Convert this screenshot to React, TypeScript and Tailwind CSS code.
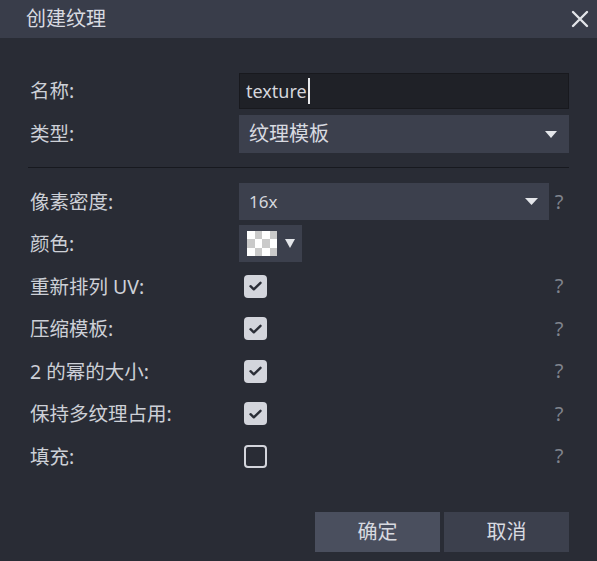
import React from "react";

const font = { fontFamily: '"Noto Sans", "Noto Sans CJK SC", sans-serif' };

function Check({ checked }: { checked: boolean }) {
  if (!checked)
    return <div className="w-[23px] h-[23px] rounded-[4px] border-[2px] border-[#d3d5dc]" />;
  return (
    <div className="w-[23px] h-[23px] rounded-[4px] bg-[#d3d5dc] flex items-center justify-center">
      <svg width="13" height="10" viewBox="0 0 13 10">
        <path d="M1.5 5.2 L4.8 8.3 L11.5 1.8" fill="none" stroke="#2a2d36" strokeWidth="2.4" strokeLinecap="round" strokeLinejoin="round" />
      </svg>
    </div>
  );
}

function Tri({ w = 12, h = 7 }: { w?: number; h?: number }) {
  return (
    <svg width={w} height={h} viewBox={`0 0 ${w} ${h}`}>
      <path d={`M0 0 L${w} 0 L${w / 2} ${h} Z`} fill="#e4e6ea" />
    </svg>
  );
}

function Help() {
  return <span className="text-[20px] text-[#7f838d] leading-none">?</span>;
}

export default function App() {
  const rows: [string, boolean][] = [
    ["重新排列 UV:", true],
    ["压缩模板:", true],
    ["2 的幂的大小:", true],
    ["保持多纹理占用:", true],
    ["填充:", false],
  ];
  return (
    <div className="w-[597px] h-[561px] bg-[#292c35] flex flex-col text-[#cdd0d7]" style={font}>
      <div className="h-[38px] bg-[#393d4a] flex items-center justify-between pl-[26px] pr-[8px] shrink-0">
        <span className="text-[20px] text-[#d8dae0] leading-none">创建纹理</span>
        <svg width="18" height="18" viewBox="0 0 18 18">
          <path d="M2 2 L16 16 M16 2 L2 16" stroke="#e2e4e8" strokeWidth="2.4" strokeLinecap="round" />
        </svg>
      </div>
      <div className="flex flex-col pl-[30px] pr-[28px] pt-[35px]">
        <div className="flex items-center h-[36px]">
          <span className="w-[209px] text-[19.5px]">名称:</span>
          <div className="flex-1 h-full bg-[#1f2127] border border-[#18191e] flex items-center pl-[6px] text-[18px] text-[#d4d6dc]">
            texture<span className="inline-block w-[2px] h-[26px] bg-[#e8e9ec] ml-[1px]" />
          </div>
        </div>
        <div className="flex items-center h-[38px] mt-[6px]">
          <span className="w-[209px] text-[19.5px]">类型:</span>
          <div className="flex-1 h-full bg-[#3c404d] flex items-center justify-between pl-[10px] pr-[12px] text-[20px] text-[#d8dae0]">
            <span>纹理模板</span>
            <Tri w={12} h={7} />
          </div>
        </div>
        <div className="h-[1px] bg-[#17191f] mt-[14px] ml-[-2px]" />
        <div className="flex items-center h-[37px] mt-[15px]">
          <span className="w-[209px] text-[19.5px]">像素密度:</span>
          <div className="w-[310px] h-full bg-[#3c404d] flex items-center justify-between pl-[10px] pr-[11px] text-[17px] text-[#d4d6dc]">
            <span>16x</span>
            <Tri w={13} h={7} />
          </div>
          <div className="flex-1 flex justify-center"><Help /></div>
        </div>
        <div className="flex items-center h-[37px] mt-[5px]">
          <span className="w-[209px] text-[19.5px]">颜色:</span>
          <div className="w-[63px] h-full bg-[#3c404d] flex items-center pl-[8px] gap-[8px]">
            <div className="w-[30px] h-[25px] grid grid-cols-4 grid-rows-3">
              {Array.from({ length: 12 }).map((_, i) => {
                const r = Math.floor(i / 4);
                const c = i % 4;
                return <div key={i} className={(r + c) % 2 === 0 ? "bg-white" : "bg-[#cacaca]"} />;
              })}
            </div>
            <Tri w={10} h={9} />
          </div>
        </div>
        <div className="flex flex-col mt-[3px]">
          {rows.map(([label, checked]) => (
            <div key={label} className="flex items-center h-[42.5px]">
              <span className="w-[214px] text-[19.5px]">{label}</span>
              <Check checked={checked} />
              <div className="flex-1" />
              <div className="w-[20px] flex justify-center"><Help /></div>
            </div>
          ))}
        </div>
        <div className="flex justify-end gap-[4px] mt-[34px]">
          <button className="w-[125px] h-[40px] bg-[#4a4f5e] text-[20px] text-[#d8dae0]">确定</button>
          <button className="w-[125px] h-[40px] bg-[#3c404d] text-[20px] text-[#d8dae0]">取消</button>
        </div>
      </div>
    </div>
  );
}
